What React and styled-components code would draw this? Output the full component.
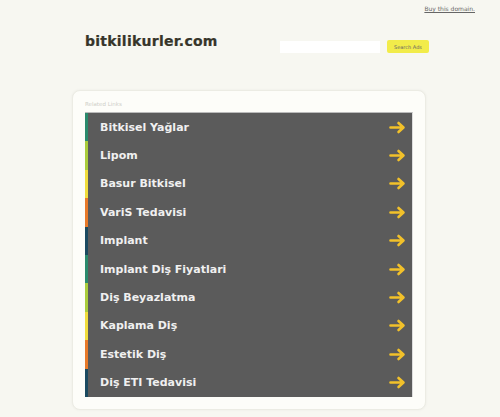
import React from 'react'
import styled, { createGlobalStyle } from 'styled-components'

const GlobalStyle = createGlobalStyle`
    html, body {
        margin: 0;
        padding: 0;
        background: #f7f7f1;
        font-family: 'DejaVu Sans', Verdana, sans-serif;
    }
`

const Page = styled.div`
    width: 500px;
    height: 417px;
    overflow: hidden;
    display: flex;
    flex-direction: column;
`

const TopBar = styled.div`
    display: flex;
    justify-content: flex-end;
    padding: 5px 25px 0 0;
    height: 12px;
`

const BuyLink = styled.a`
    font-size: 6px;
    color: #666;
    text-decoration: underline;
`

const Header = styled.div`
    display: flex;
    align-items: flex-start;
    justify-content: space-between;
    padding: 16px 71px 0 85px;
    height: 57px;
`

const Logo = styled.div`
    font-size: 14px;
    font-weight: bold;
    letter-spacing: 0.25px;
    color: #36352a;
    -webkit-text-stroke: 0.2px #36352a;
`

const SearchForm = styled.div`
    display: flex;
    align-items: center;
    gap: 7px;
    margin-top: 7px;
`

const SearchInput = styled.div`
    width: 100px;
    height: 12px;
    background: #fff;
`

const SearchButton = styled.div`
    width: 42px;
    height: 13px;
    background: #f2ec4a;
    border-radius: 2px;
    font-size: 5px;
    color: #666;
    display: flex;
    align-items: center;
    justify-content: center;
`

const Card = styled.div`
    margin-left: 72px;
    width: 354px;
    height: 320px;
    box-sizing: border-box;
    background: #fdfdf9;
    border: 1px solid #ecece4;
    border-radius: 8px;
    box-shadow: 0 0 3px rgba(0, 0, 0, 0.05);
    padding: 10px 14px 0 12px;
`

const Caption = styled.div`
    font-size: 5.5px;
    color: #cfcfc8;
    height: 11px;
`

const List = styled.div`
    display: flex;
    flex-direction: column;
    width: 327px;
    background: #5b5b5b;
    border-right: 1px solid #ddd;
    border-top: 1px solid #bbb;
`

const Row = styled.div`
    display: flex;
    align-items: center;
    justify-content: space-between;
    height: 28.4px;
    border-left: 3px solid ${(p) => p.$accent};
    padding: 0 6px 0 12px;
`

const Label = styled.span`
    font-size: 11px;
    font-weight: bold;
    color: #f0f0f0;
`

const Arrow = () => (
    <svg width="17" height="13" viewBox="0 0 17 13">
        <path d="M1.5 6.5H14M9.5 2L14.5 6.5L9.5 11" fill="none" stroke="#f2c12a" strokeWidth="2.6" strokeLinecap="round" strokeLinejoin="round" />
    </svg>
)

const links = [
    { text: 'Bitkisel Yağlar', accent: '#2a8a6c' },
    { text: 'Lipom', accent: '#a9cc3c' },
    { text: 'Basur Bitkisel', accent: '#f0dc3c' },
    { text: 'VariS Tedavisi', accent: '#e87a2a' },
    { text: 'Implant', accent: '#1b4a60' },
    { text: 'Implant Diş Fiyatlari', accent: '#2a8a6c' },
    { text: 'Diş Beyazlatma', accent: '#a9cc3c' },
    { text: 'Kaplama Diş', accent: '#f0dc3c' },
    { text: 'Estetik Diş', accent: '#e87a2a' },
    { text: 'Diş ETI Tedavisi', accent: '#1b4a60' }
]

const App = () => (
    <Page>
        <GlobalStyle />
        <TopBar>
            <BuyLink>Buy this domain.</BuyLink>
        </TopBar>
        <Header>
            <Logo>bitkilikurler.com</Logo>
            <SearchForm>
                <SearchInput />
                <SearchButton>Search Ads</SearchButton>
            </SearchForm>
        </Header>
        <Card>
            <Caption>Related Links</Caption>
            <List>
                {links.map(({ text, accent }) => (
                    <Row key={text} $accent={accent}>
                        <Label>{text}</Label>
                        <Arrow />
                    </Row>
                ))}
            </List>
        </Card>
    </Page>
)

export default App
